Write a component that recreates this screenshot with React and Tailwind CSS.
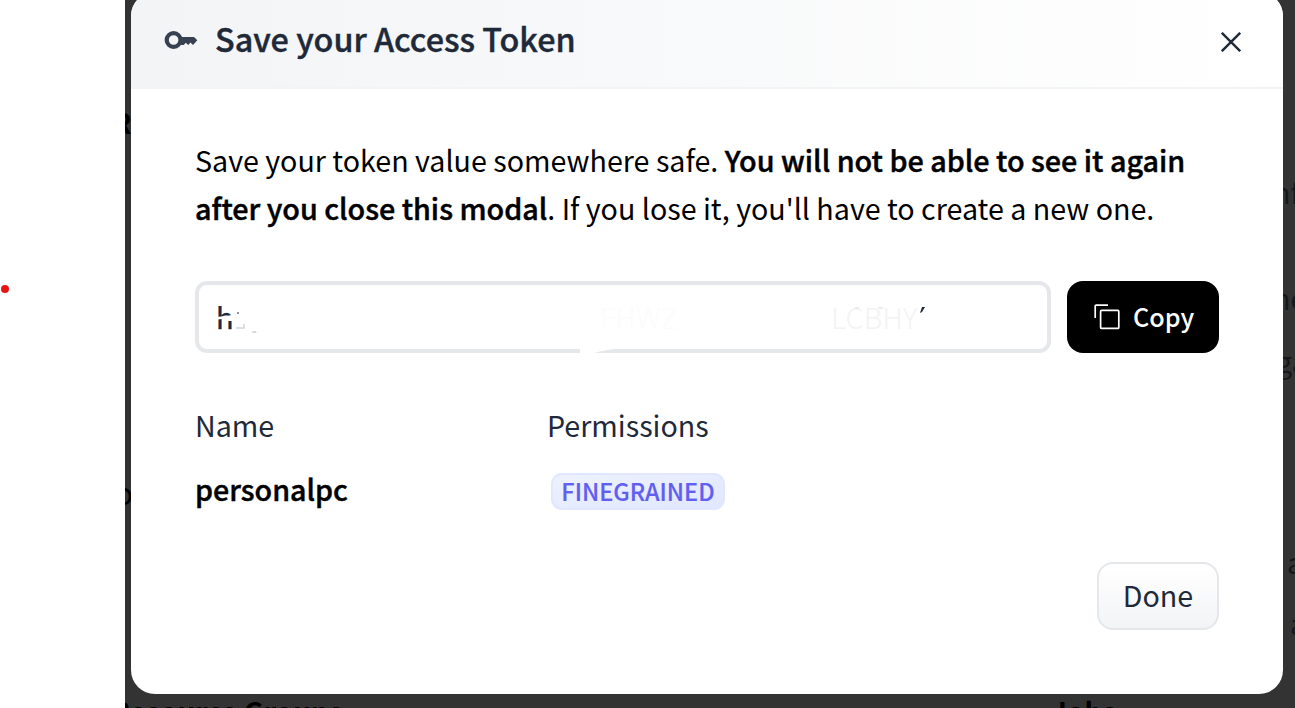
import React from "react";

// bits of the settings page that stay visible around the modal
function PageBehind() {
  return (
    <div className="absolute inset-0 text-[28.7px] leading-[48px] text-[#15171b] whitespace-nowrap">
      <span className="absolute -left-[13px] top-[98px] font-bold text-black">R</span>
      <span className="absolute -left-[11px] top-[467px] text-black text-[32px]">o</span>
      <span className="absolute -left-[14px] top-[687px] font-bold text-black text-[28px]">
        Resource Groups
      </span>
      <span className="absolute left-[926px] top-[687px] font-bold text-black text-[28px]">Jobs</span>
      <span className="absolute left-[1148px] top-[168px]">nf</span>
      <span className="absolute left-[1148px] top-[274px]">ne</span>
      <span className="absolute left-[1151px] top-[337px]">ga</span>
      <span className="absolute left-[1162px] top-[538px]">a</span>
      <span className="absolute left-[1165px] top-[599px]">a</span>
    </div>
  );
}

function KeyIcon() {
  return (
    <svg className="w-[34px] h-5" viewBox="0 0 34 20" fill="none">
      <circle cx="9.6" cy="10" r="6.9" stroke="#374151" strokeWidth="4.2" />
      <path
        d="M17 7H30L33.3 10.2L29 15L26.5 12.6L24.2 15L21.8 12.8L19.7 15H17Z"
        fill="#374151"
      />
    </svg>
  );
}

function CloseIcon() {
  return (
    <svg className="w-5 h-5" viewBox="0 0 20 20" fill="none" stroke="#1f2937" strokeWidth="2.4">
      <path d="M0.8 0.8L19.2 19.2M19.2 0.8L0.8 19.2" />
    </svg>
  );
}

function CopyIcon() {
  return (
    <svg className="w-[26px] h-[26px]" viewBox="0 0 26 26" fill="none" stroke="white" strokeWidth="1.7">
      <rect x="6.6" y="6.4" width="18.2" height="18" rx="1" />
      <path d="M1.2 14V2.2Q1.2 1.2 2.2 1.2H14" />
    </svg>
  );
}

function TokenField() {
  return (
    <div className="relative w-[856px] h-[72px] border-4 border-gray-200 rounded-xl text-[29px] leading-[64px] text-gray-800">
      <span className="absolute left-[17px] -top-px [-webkit-text-stroke:0.4px]">h</span>
      <span className="absolute left-[53px] -top-px text-gray-300">_</span>
      <span className="absolute left-[632px] -top-px text-[#f3f3f4] font-light">LCBHY</span>
      <span className="absolute left-[401px] -top-px text-[#fcfcfd] font-light">FHWZ</span>
      {/* smudges over the token */}
      <svg className="absolute -left-1 -top-1 w-[856px] h-[74px]" viewBox="0 0 856 74">
        <path d="M18 36.5L38 34V40H33Q30 37 27 38L18 39Z" fill="white" />
        <path d="M61 46H80V54H73L61 51.5Z" fill="white" />
        <circle cx="43" cy="32" r="1" fill="#6b7280" />
        <path d="M41 47H49V43" stroke="#d1d5db" fill="none" strokeWidth="1.5" />
        <path d="M660 27H664M683 27H688" stroke="#d9dadd" fill="none" />
        <path d="M725 32L727 26H730L727 31Z" fill="#1f2937" />
        <path d="M385 67H426Q410 69 399 72V74H385Z" fill="white" />
      </svg>
    </div>
  );
}

export default function App() {
  return (
    <div className="flex w-[1295px] h-[708px] overflow-hidden bg-white font-['Noto_Sans_CJK_SC',sans-serif] text-[28.65px] text-black">
      <div className="relative w-[125px] shrink-0">
        <span className="absolute left-px top-[285px] w-2 h-2 rounded-full bg-[#e81414]"></span>
      </div>

      <div className="relative flex-1 overflow-hidden bg-[#333333]">
        <PageBehind />

        <main className="relative ml-1.5 -mt-2 w-[1152px] h-[702px] rounded-3xl bg-white overflow-hidden">
          <header className="flex items-center h-[97px] pt-2 pl-[33px] pr-[42px] border-b-2 border-gray-100 bg-linear-to-r from-gray-100 to-white">
            <div className="-mt-[7px]">
              <KeyIcon />
            </div>
            <h1 className="ml-[17px] -mt-[11px] text-[32.3px] leading-[48px] font-medium text-gray-800 [-webkit-text-stroke:0.4px]">
              Save your Access Token
            </h1>
            <button className="ml-auto -mt-1">
              <CloseIcon />
            </button>
          </header>

          <div className="px-16 pt-[47px]">
            <p className="leading-[48px] whitespace-nowrap">
              Save your token value somewhere safe.{" "}
              <b className="text-[28.72px] font-medium [-webkit-text-stroke:0.45px]">
                You will not be able to see it again
                <br />
                after you close this modal
              </b>
              . If you lose it, you'll have to create a new one.
            </p>

            <div className="flex gap-4 mt-[49px]">
              <TokenField />
              <button className="flex items-center w-[152px] h-[72px] pl-[27px] rounded-2xl bg-black text-white">
                <CopyIcon />
                <span className="ml-[13px] -mt-px text-[25.2px] font-medium">Copy</span>
              </button>
            </div>

            <div className="grid grid-cols-[352px_1fr] mt-12 leading-[48px]">
              <span className="text-gray-800">Name</span>
              <span className="text-gray-800">Permissions</span>
              <span className="mt-4 font-medium [-webkit-text-stroke:0.45px]">personalpc</span>
              <div className="mt-6 ml-1 flex items-center justify-center w-[174px] h-[37px] rounded-[11px] border-2 border-indigo-100 bg-linear-to-br from-indigo-50 to-indigo-100">
                <span className="-mt-0.5 text-[23.5px] leading-8 font-medium text-[#625ff0] [-webkit-text-stroke:0.2px]">
                  FINEGRAINED
                </span>
              </div>
            </div>

            <div className="flex justify-end mt-[49px]">
              <button className="w-[122px] h-[68px] pb-0.5 rounded-2xl border-2 border-gray-200 bg-linear-to-b from-white to-gray-100 text-gray-800">
                Done
              </button>
            </div>
          </div>
        </main>
      </div>
    </div>
  );
}
